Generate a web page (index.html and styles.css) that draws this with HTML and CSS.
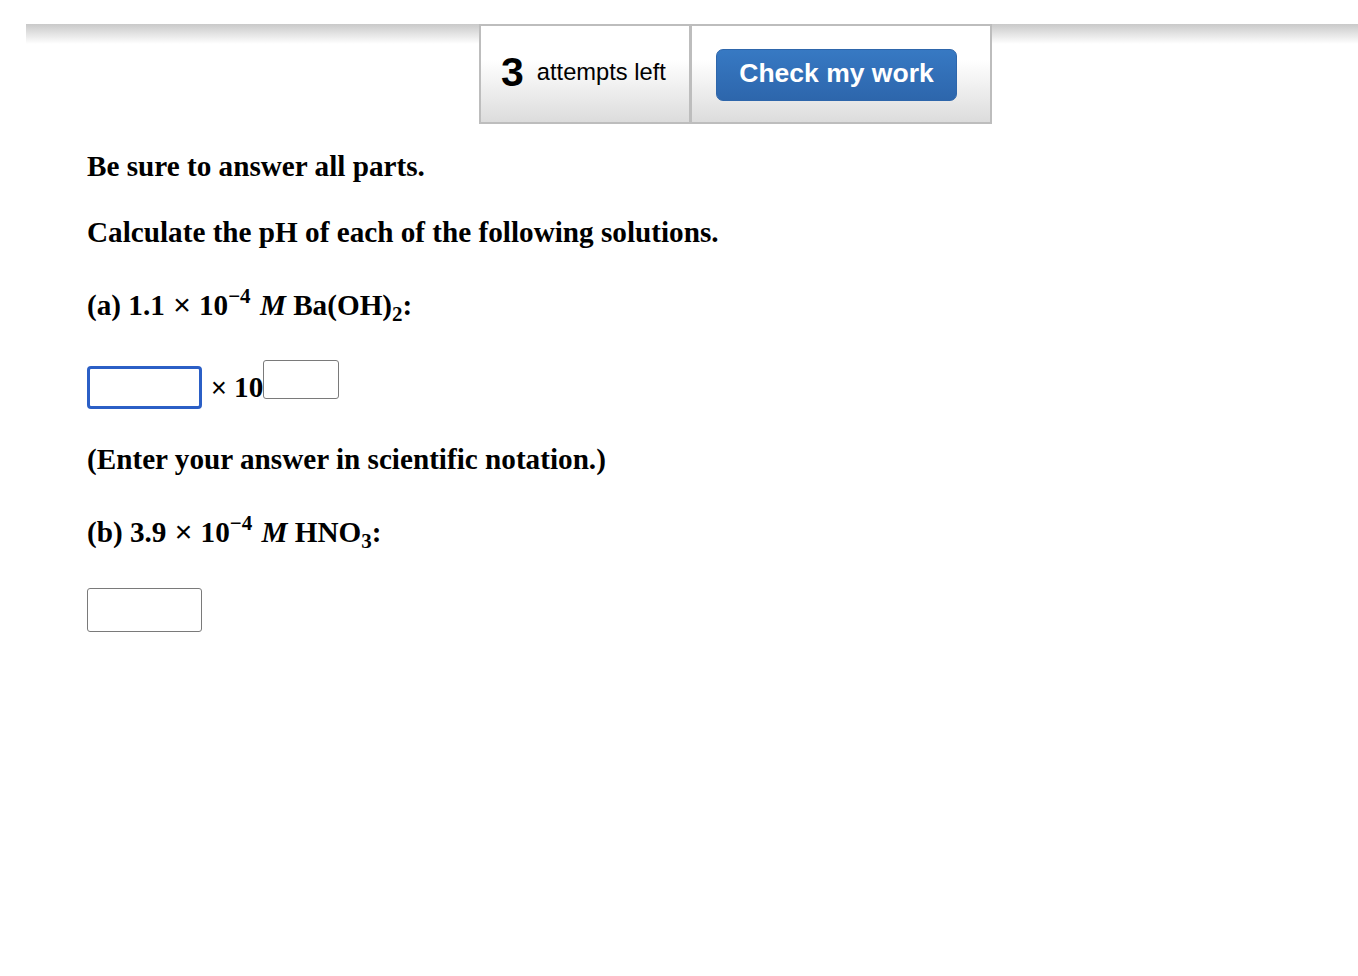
FILE: index.html
```html
<!DOCTYPE html>
<html>
<head>
<meta charset="utf-8">
<link rel="stylesheet" href="styles.css">
</head>
<body>
<div class="topbar">
  <div class="attempts">
    <span class="num">3</span><span class="lbl">attempts left</span>
  </div>
  <div class="checkbox">
    <button class="check">Check my work</button>
  </div>
</div>
<div class="content">
  <p class="line l1">Be sure to answer all parts.</p>
  <p class="line l2">Calculate the pH of each of the following solutions.</p>
  <p class="line l3">(a) 1.1 <span class="x xl">×</span> 10<sup>−4</sup> <i>M</i> Ba(OH)<sub>2</sub>:</p>
  <div class="ansrow">
    <div class="inp inp-active"></div>
    <span class="times"><span class="x">×</span> 10</span>
    <div class="inp inp-exp"></div>
  </div>
  <p class="line l4">(Enter your answer in scientific notation.)</p>
  <p class="line l5">(b) 3.9 <span class="x xl">×</span> 10<sup>−4</sup> <i>M</i> HNO<sub>3</sub>:</p>
  <div class="inp inp-b"></div>
</div>
</body>
</html>
```
FILE: styles.css
```css
html, body {
  margin: 0;
  padding: 0;
  background: #fff;
}
body {
  font-family: "Liberation Serif", "Times New Roman", serif;
  color: #000;
}
.topbar {
  margin: 24px 0 0 26px;
  height: 100px;
  display: flex;
  background: linear-gradient(to bottom, #c9c9c9 0px, #fff 20px, #fff 100%);
  background-repeat: no-repeat;
}
.attempts, .checkbox {
  box-sizing: border-box;
  height: 100px;
  border: 2px solid #bdbdbd;
  background: linear-gradient(to bottom, #fff 0%, #fff 35%, #dcdcdc 100%);
  display: flex;
  align-items: center;
}
.attempts {
  margin-left: 453px;
  width: 211px;
  border-right-width: 1px;
  padding-left: 20px;
  font-family: "Liberation Sans", Arial, sans-serif;
}
.num {
  font-size: 41px;
  font-weight: bold;
  margin-right: 13px;
  margin-top: -4px;
}
.lbl {
  font-size: 23.7px;
  margin-top: -4px;
}
.checkbox {
  width: 302px;
  border-left-width: 2px;
  border-left-color: #bdbdbd;
  padding-left: 24px;
  align-items: flex-start;
}
.check {
  margin-top: 23px;
  width: 241px;
  height: 52px;
  border: 1px solid #2e66ab;
  border-radius: 7px;
  background: linear-gradient(to bottom, #3779c3, #2d66ac);
  color: #fff;
  font-family: "Liberation Sans", Arial, sans-serif;
  font-weight: bold;
  font-size: 26.5px;
  padding: 0 0 4px 0;
}
.content {
  padding-left: 87px;
}
.line {
  margin: 0;
  font-size: 29.2px;
  font-weight: bold;
  line-height: 33px;
}
.l1 { margin-top: 26px; }
.l2 { margin-top: 33px; }
.l3 { margin-top: 39px; }
.l4 { margin-top: 35px; }
.l5 { margin-top: 39px; }
.x {
  font-family: "Liberation Sans", Arial, sans-serif;
  font-weight: normal;
  font-size: 27px;
}
.xl {
  font-size: 30px;
  margin: 0 1px;
}
sup {
  font-size: 21px;
  line-height: 0;
  vertical-align: 12px;
  margin-right: 2px;
}
sub {
  font-size: 21px;
  line-height: 0;
  vertical-align: -6px;
}
i {
  font-style: italic;
}
.ansrow {
  margin-top: 38px;
  display: flex;
  align-items: flex-start;
  height: 48px;
}
.inp {
  box-sizing: border-box;
  background: #fff;
}
.inp-active {
  margin-top: 6px;
  width: 115px;
  height: 43px;
  border: 3px solid #2b5fc6;
  border-radius: 4px;
}
.times {
  margin-top: 11px;
  margin-left: 9px;
  font-size: 29.2px;
  font-weight: bold;
  line-height: 33px;
}
.inp-exp {
  width: 76px;
  height: 39px;
  border: 1.5px solid #7a7a7a;
  border-radius: 3px;
}
.inp-b {
  margin-top: 39px;
  width: 115px;
  height: 44px;
  border: 1.5px solid #7a7a7a;
  border-radius: 3px;
}
```
